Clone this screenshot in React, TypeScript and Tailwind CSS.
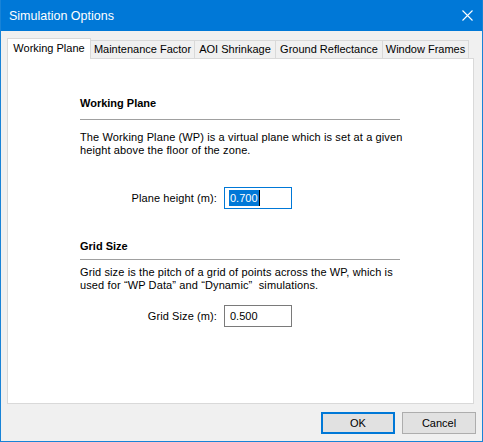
const font = { fontFamily: '"Liberation Sans", Arial, sans-serif' }

const tabs = [
  { label: 'Working Plane', w: 'w-[84px]', active: true },
  { label: 'Maintenance Factor', w: 'w-[105px]' },
  { label: 'AOI Shrinkage', w: 'w-[82px]' },
  { label: 'Ground Reflectance', w: 'w-[108px]' },
  { label: 'Window Frames', w: 'w-[87px]' },
]

function CloseIcon() {
  return (
    <svg width="11" height="11" viewBox="0 0 11 11" className="block">
      <path d="M0.5 0.5 L10.5 10.5 M10.5 0.5 L0.5 10.5" stroke="#fff" strokeWidth="1.1" />
    </svg>
  )
}

function FieldRow({ label, value, focused }: { label: string; value: string; focused?: boolean }) {
  return (
    <div className="flex items-center">
      <span className="w-[137px] text-right text-[11px] leading-[13px] tracking-[0.1px] text-black">{label}</span>
      <div
        className={
          focused
            ? 'ml-[7px] w-[68px] h-[22px] border border-[#0078d7] bg-white flex items-center pl-[4px]'
            : 'ml-[7px] w-[68px] h-[22px] border border-[#7a7a7a] bg-white flex items-center pl-[5px]'
        }
      >
        {focused ? (
          <>
            <span className="bg-[#0078d7] text-white text-[11px] leading-[16px] px-px">{value}</span>
            <span className="w-px h-[16px] bg-black" />
          </>
        ) : (
          <span className="text-[11px] leading-[16px] text-black">{value}</span>
        )}
      </div>
    </div>
  )
}

export default function App() {
  return (
    <div
      className="w-[483px] h-[442px] flex flex-col bg-[#f0f0f0] border-x border-b border-[#1883d7] select-none"
      style={font}
    >
      {/* title bar */}
      <div className="h-[31px] shrink-0 bg-[#0078d7] flex items-center justify-between pl-[8px] pr-[9px]">
        <span className="text-white text-[12.5px] leading-[16px]">Simulation Options</span>
        <CloseIcon />
      </div>

      <div className="flex-1 flex flex-col pt-[7px] pl-[6px] pr-[8px]">
        {/* tab strip */}
        <div className="flex items-end h-[21px] -mb-px relative z-10">
          {tabs.map((t) =>
            t.active ? (
              <div
                key={t.label}
                className={`${t.w} h-[21px] bg-white border-x border-t border-[#d9d9d9] flex items-center justify-center pb-[1px] text-[11px] text-black`}
              >
                {t.label}
              </div>
            ) : (
              <div
                key={t.label}
                className={`${t.w} h-[19px] -ml-px first:ml-0 bg-[#f0f0f0] border border-[#d9d9d9] flex items-center justify-center text-[11px] text-black`}
              >
                {t.label}
              </div>
            )
          )}
        </div>

        {/* tab panel */}
        <div className="h-[346px] bg-white border border-[#d9d9d9] pl-[72px]">
          <div className="w-[330px] flex flex-col">
            <h2 className="mt-[38px] text-[11px] leading-[13px] font-bold text-black">Working Plane</h2>
            <div className="mt-[9px] w-[320px] h-px bg-[#a0a0a0]" />
            <p className="mt-[11px] text-[11px] leading-[13px] tracking-[0.12px] text-black">
              The Working Plane (WP) is a virtual plane which is set at a given height above the floor of the zone.
            </p>
            <div className="mt-[30px]">
              <FieldRow label="Plane height (m):" value="0.700" focused />
            </div>

            <h2 className="mt-[31px] text-[11px] leading-[13px] font-bold text-black">Grid Size</h2>
            <div className="mt-[6px] w-[320px] h-px bg-[#a0a0a0]" />
            <p className="mt-[6px] w-[322px] text-[11px] leading-[13px] tracking-[0.12px] text-black">
              Grid size is the pitch of a grid of points across the WP, which is used for “WP Data” and “Dynamic”&nbsp; simulations.
            </p>
            <div className="mt-[13px]">
              <FieldRow label="Grid Size (m):" value="0.500" />
            </div>
          </div>
        </div>

        {/* buttons */}
        <div className="mt-[8px] -mr-[2px] flex justify-end gap-[7px]">
          <button className="w-[74px] h-[22px] bg-[#e1e1e1] border-2 border-[#0078d7] text-[11px] text-black">
            OK
          </button>
          <button className="w-[74px] h-[22px] bg-[#e1e1e1] border border-[#adadad] text-[11px] text-black">
            Cancel
          </button>
        </div>
      </div>
    </div>
  )
}
